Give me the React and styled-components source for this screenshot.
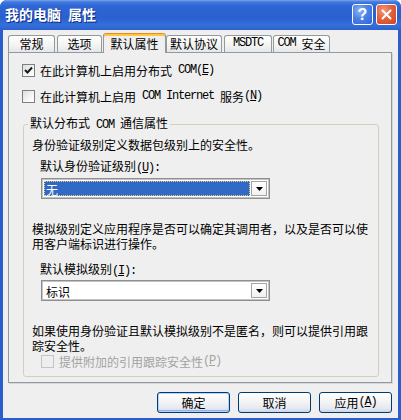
import React from 'react';
import styled, { createGlobalStyle } from 'styled-components';

const GlobalStyle = createGlobalStyle`
  html, body {
    margin: 0;
    padding: 0;
    background: #ffffff;
  }
  body {
    font-family: "Noto Sans CJK SC", "Noto Sans", sans-serif;
    font-size: 12px;
    color: #000;
  }
`;

const Window = styled.div`
  width: 401px;
  height: 420px;
  box-sizing: border-box;
  display: flex;
  flex-direction: column;
  background: #2b5dcc;
  border-radius: 7px 7px 0 0;
  overflow: hidden;
`;

const TitleBar = styled.div`
  flex: none;
  height: 30px;
  box-sizing: border-box;
  display: flex;
  align-items: flex-start;
  padding: 4px 4px 0 5px;
  background: linear-gradient(
    #7aa6ee 0px,
    #4279dd 2px,
    #2e66d4 6px,
    #2a5fd0 18px,
    #3570da 25px,
    #2c60cf 30px
  );
`;

const Title = styled.div`
  flex: 1;
  font-size: 14px;
  font-weight: bold;
  line-height: 21px;
  color: #ffffff;
  text-shadow: 1px 1px 0 #0c2a86;
  white-space: pre;
`;

const CaptionButton = styled.div`
  width: 21px;
  height: 21px;
  box-sizing: border-box;
  margin-left: ${(p) => p.$gap || 0}px;
  border: 1px solid #ffffff;
  border-radius: 3px;
  display: flex;
  align-items: center;
  justify-content: center;
  background: ${(p) =>
    p.$close
      ? 'radial-gradient(circle at 35% 30%, #f39a7c 0%, #e2623c 45%, #cc4521 100%)'
      : 'radial-gradient(circle at 35% 30%, #8fb4f4 0%, #4b82e6 45%, #2f64d4 100%)'};
  color: #ffffff;
  font-family: "Liberation Sans", sans-serif;
  font-weight: bold;
  font-size: 16px;
  line-height: 1;
`;

const Body = styled.div`
  flex: 1;
  display: flex;
  flex-direction: column;
  margin: 0 3px 3px;
  padding: 3px 6px 5px 5px;
  background: #efefef;
`;

const TabStrip = styled.div`
  display: flex;
  align-items: flex-end;
  height: 20px;
  margin-bottom: -1px;
  position: relative;
  z-index: 1;
`;

const Tab = styled.div`
  box-sizing: border-box;
  width: ${(p) => p.$w}px;
  height: ${(p) => (p.$active ? 20 : 17)}px;
  margin-bottom: ${(p) => (p.$active ? 0 : 1)}px;
  margin-right: ${(p) => p.$mr || 0}px;
  padding-top: ${(p) => (p.$active ? 2 : 0)}px;
  border: 1px solid #919b9c;
  border-bottom: none;
  border-top-color: ${(p) => (p.$active ? '#e68b2c' : '#919b9c')};
  border-radius: 3px 3px 0 0;
  display: flex;
  justify-content: center;
  line-height: 15px;
  white-space: nowrap;
  background: ${(p) =>
    p.$active ? '#efefef' : 'linear-gradient(#ffffff, #f3f3f1 60%, #e4e6ec)'};
  box-shadow: ${(p) => (p.$active ? 'inset 0 2px 0 #ffc83c' : 'none')};
`;

const Panel = styled.div`
  box-sizing: border-box;
  height: 331px;
  padding: 11px 0 0 13px;
  border: 1px solid #919b9c;
  background: #efefef;
  box-shadow: 1px 1px 0 #d3d6dc;
`;

const Mono = styled.span`
  font-family: "Liberation Mono", monospace;
  font-size: 12px;
  letter-spacing: -1.2px;
`;

const Key = styled.u`
  text-underline-offset: 1px;
`;

const CheckRow = styled.div`
  display: flex;
  align-items: center;
  height: 13px;
  margin-top: ${(p) => p.$mt || 0}px;
  margin-left: ${(p) => p.$ml || 0}px;
  line-height: 13px;
  white-space: nowrap;
  color: ${(p) => (p.$disabled ? '#a3a3a3' : '#000000')};
`;

const Box = styled.span`
  flex: none;
  width: 13px;
  height: 13px;
  box-sizing: border-box;
  margin-right: 5px;
  border: 1px solid ${(p) => (p.$disabled ? '#c4c4c4' : '#77808c')};
  background: ${(p) =>
    p.$disabled ? '#eeeeee' : 'linear-gradient(135deg, #dcdcd8, #f6f6f4 60%, #ffffff)'};
  display: flex;
  align-items: center;
  justify-content: center;
`;

const Group = styled.fieldset`
  margin: 14px 12px 0 1px;
  padding: 6px 0 8px 8px;
  border: 1px solid #d0d0bf;
  border-radius: 3px;
  min-width: 0;
`;

const Legend = styled.legend`
  margin-left: -4px;
  padding: 0 2px;
  line-height: 12px;
  white-space: nowrap;
`;

const Text = styled.p`
  margin: ${(p) => p.$mt || 0}px 0 0 ${(p) => p.$ml || 0}px;
  line-height: 15px;
`;

const Combo = styled.div`
  display: flex;
  width: 229px;
  height: 21px;
  box-sizing: border-box;
  margin: ${(p) => p.$mt || 0}px 0 0 9px;
  border: 1px solid #8f8f8f;
  box-shadow: inset 0 0 0 1px #c3c3c3;
  padding: 2px;
  background: #ffffff;
`;

const ComboField = styled.div`
  flex: 1;
  box-sizing: border-box;
  margin-right: 1px;
  padding-left: 1px;
  line-height: 15px;
  color: ${(p) => (p.$selected ? '#ffffff' : '#000000')};
  background: ${(p) => (p.$selected ? '#316ac5' : '#ffffff')};
  border: 1px ${(p) => (p.$selected ? 'dotted #e8d27a' : 'solid transparent')};
`;

const ComboButton = styled.div`
  flex: none;
  width: 16px;
  box-sizing: border-box;
  border: 1px solid #a4a4a4;
  background: linear-gradient(#ffffff, #f1f1f1);
  display: flex;
  align-items: center;
  justify-content: center;
`;

const ButtonRow = styled.div`
  display: flex;
  justify-content: flex-end;
  gap: 8px;
  margin-top: 9px;
`;

const Button = styled.div`
  width: 73px;
  height: 21px;
  box-sizing: border-box;
  border: 1px solid #003c74;
  border-radius: 3px;
  display: flex;
  align-items: center;
  justify-content: center;
  line-height: 15px;
  background: linear-gradient(#ffffff, #f4f4f4 45%, #e6e9f0 80%, #cdd6e6);
  box-shadow: ${(p) =>
    p.$default ? 'inset 0 0 0 1px #b9d1f8, inset 0 -1px 0 1px #8eb2ee' : 'none'};
`;

const Check = () => (
  <svg width="9" height="9" viewBox="0 0 9 9">
    <path d="M1 4 L3.5 6.5 L8 1.5" fill="none" stroke="#1a1a1a" strokeWidth="2" />
  </svg>
);

const Arrow = () => (
  <svg width="7" height="4" viewBox="0 0 7 4">
    <path d="M0 0 H7 L3.5 4 Z" fill="#000" />
  </svg>
);

const CloseGlyph = () => (
  <svg width="11" height="11" viewBox="0 0 11 11">
    <path d="M1.5 1.5 L9.5 9.5 M9.5 1.5 L1.5 9.5" stroke="#fff" strokeWidth="2" strokeLinecap="round" />
  </svg>
);

const SP = '\u00a0';

const tabs = [
  { label: '常规', w: 47, mr: 2 },
  { label: '选项', w: 45, mr: 1 },
  { label: '默认属性', w: 63, mr: 0, active: true },
  { label: '默认协议', w: 56, mr: 2 },
  { label: <Mono>MSDTC</Mono>, w: 48, mr: 1 },
  { label: <><Mono>{`COM${SP}`}</Mono>安全</>, w: 57, mr: 0 },
];

export default function App() {
  return (
    <>
      <GlobalStyle />
      <Window>
        <TitleBar>
          <Title>我的电脑{'\u2002'}属性</Title>
          <CaptionButton>?</CaptionButton>
          <CaptionButton $close $gap={3}>
            <CloseGlyph />
          </CaptionButton>
        </TitleBar>
        <Body>
          <TabStrip>
            {tabs.map((t, i) => (
              <Tab key={i} $w={t.w} $mr={t.mr} $active={t.active}>
                {t.label}
              </Tab>
            ))}
          </TabStrip>
          <Panel>
            <CheckRow>
              <Box><Check /></Box>
              在此计算机上启用分布式<Mono>{`${SP}COM(`}<Key>E</Key>)</Mono>
            </CheckRow>
            <CheckRow $mt={13}>
              <Box />
              在此计算机上启用<Mono>{`${SP}COM${SP}Internet${SP}`}</Mono>服务<Mono>(<Key>N</Key>)</Mono>
            </CheckRow>
            <Group>
              <Legend>默认分布式<Mono>{`${SP}COM${SP}`}</Mono>通信属性</Legend>
              <Text>身份验证级别定义数据包级别上的安全性。</Text>
              <Text $mt={6} $ml={8}>
                默认身份验证级别<Mono>(<Key>U</Key>):</Mono>
              </Text>
              <Combo $mt={2}>
                <ComboField $selected>无</ComboField>
                <ComboButton><Arrow /></ComboButton>
              </Combo>
              <Text $mt={22}>
                模拟级别定义应用程序是否可以确定其调用者，以及是否可以使用客户端标识进行操作。
              </Text>
              <Text $mt={10} $ml={8}>
                默认模拟级别<Mono>(<Key>I</Key>):</Mono>
              </Text>
              <Combo $mt={1}>
                <ComboField>标识</ComboField>
                <ComboButton><Arrow /></ComboButton>
              </Combo>
              <Text $mt={22}>
                如果使用身份验证且默认模拟级别不是匿名，则可以提供引用跟踪安全性。
              </Text>
              <CheckRow $mt={2} $ml={9} $disabled>
                <Box $disabled />
                提供附加的引用跟踪安全性<Mono>(<Key>P</Key>)</Mono>
              </CheckRow>
            </Group>
          </Panel>
          <ButtonRow>
            <Button $default>确定</Button>
            <Button>取消</Button>
            <Button>
              应用<Mono>(<Key>A</Key>)</Mono>
            </Button>
          </ButtonRow>
        </Body>
      </Window>
    </>
  );
}
